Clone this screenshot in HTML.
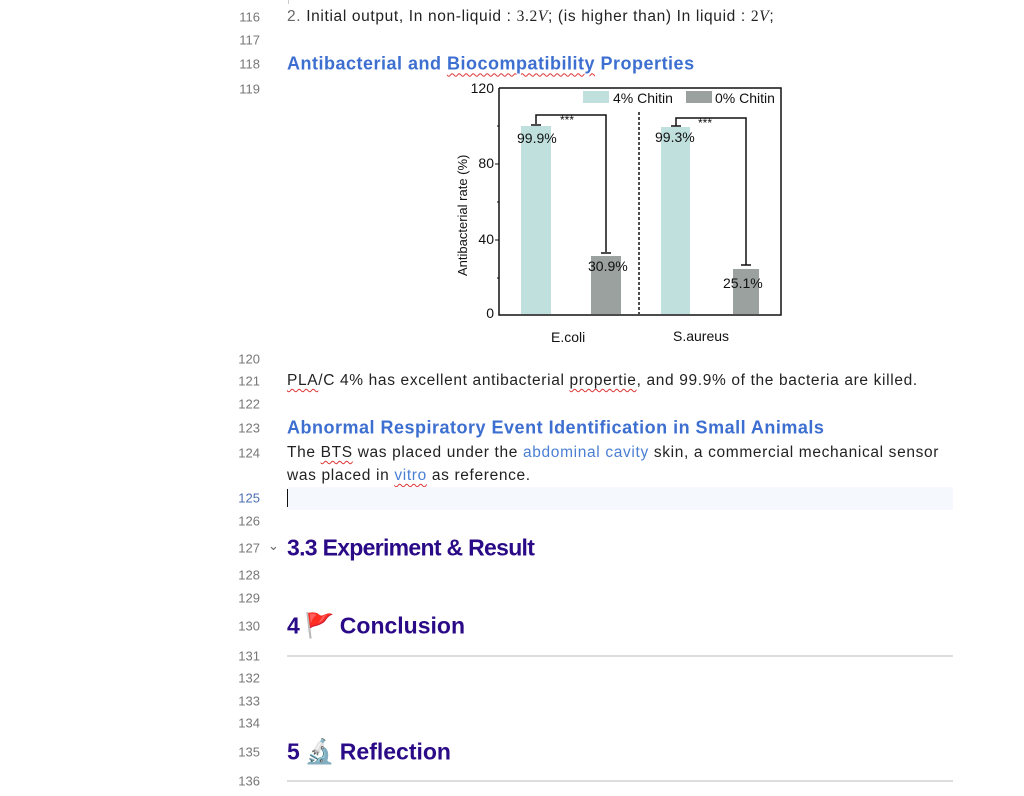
<!DOCTYPE html>
<html><head><meta charset="utf-8"><style>
body{margin:0;width:1024px;height:796px;background:#fff;position:relative;overflow:hidden;font-family:"Liberation Sans",sans-serif;color:#222}
.n{position:absolute;left:220px;width:40px;text-align:right;font-size:13px;color:#777;transform:translateY(-50%)}
.t{position:absolute;left:287px;font-size:15.5px;transform:translateY(-50%);white-space:nowrap;letter-spacing:0.65px}
.h3{color:#3d6fd0;font-weight:bold;font-size:18px;letter-spacing:0.5px}
.h2{color:#2a0a86;font-weight:bold;font-size:23px;letter-spacing:0}
.sq{text-decoration:underline wavy #d33;text-decoration-thickness:1px;text-underline-offset:3px}
.lk{color:#4a7fd4}
.hr{position:absolute;left:287px;width:666px;height:2px;background:#ddd}
.em{display:inline-block;width:40px;text-align:center;font-size:24px}
</style></head><body>
<div style="position:absolute;left:288px;top:0;width:1px;height:4px;background:#ccc"></div>
<div class="n" style="top:17px">116</div><div class="t" style="top:17px"><span style="color:#666">2.</span> Initial output, In non-liquid : <span style="font-family:'Liberation Serif',serif">3.2<i>V</i></span>; (is higher than) In liquid : <span style="font-family:'Liberation Serif',serif">2<i>V</i></span>;</div>
<div class="n" style="top:40px">117</div>
<div class="n" style="top:64px">118</div><div class="t h3" style="top:64px">Antibacterial and <span class="sq">Biocompatibility</span> Properties</div>
<div class="n" style="top:89px">119</div>
<svg style="position:absolute;left:450px;top:78px" width="340" height="272" font-family="Liberation Sans" font-size="14" fill="#111">
<rect x="71" y="48" width="30" height="188" fill="#bfe0dd"/>
<rect x="141" y="178" width="30" height="58" fill="#9aa19e"/>
<rect x="211" y="49" width="29" height="187" fill="#bfe0dd"/>
<rect x="283" y="191" width="26" height="45" fill="#9aa19e"/>
<rect x="133" y="13" width="26" height="12" fill="#bfe0dd"/>
<rect x="236" y="13" width="26" height="12" fill="#9aa19e"/>
<text x="163" y="25">4% Chitin</text><text x="265" y="25">0% Chitin</text>
<path d="M49 10V237H331V10H49" fill="none" stroke="#111" stroke-width="1.5"/>
<path d="M49 86h-4M49 162h-4M49 48h-2M49 124h-2M49 200h-2" stroke="#111"/>
<text x="44" y="15" text-anchor="end">120</text><text x="44" y="90" text-anchor="end">80</text><text x="44" y="166" text-anchor="end">40</text><text x="44" y="240" text-anchor="end">0</text>
<text transform="translate(17,198) rotate(-90)" font-size="13">Antibacterial rate (%)</text>
<path d="M189 34V236" stroke="#111" stroke-width="1.5" stroke-dasharray="3,2"/>
<path d="M86 46V37H156V174M81 47h10M151 175h10M226 48V40H296V187M221 48h10M291 187h10" fill="none" stroke="#111" stroke-width="1.5"/>
<text x="110" y="46" font-size="12">***</text><text x="248" y="49" font-size="12">***</text>
<text x="67" y="65">99.9%</text><text x="205" y="64">99.3%</text><text x="138" y="193">30.9%</text><text x="273" y="210">25.1%</text>
<text x="101" y="264">E.coli</text><text x="223" y="263">S.aureus</text>
</svg>
<div class="n" style="top:359px">120</div>
<div class="n" style="top:381px">121</div><div class="t" style="top:381px"><span class="sq">PLA</span>/C 4% has excellent antibacterial <span class="sq">propertie</span>, and 99.9% of the bacteria are killed.</div>
<div class="n" style="top:404px">122</div>
<div class="n" style="top:428px">123</div><div class="t h3" style="top:428px">Abnormal Respiratory Event Identification in Small Animals</div>
<div class="n" style="top:453px">124</div><div class="t" style="top:453px">The <span class="sq">BTS</span> was placed under the <span class="lk">abdominal cavity</span> skin, a commercial mechanical sensor</div>
<div class="t" style="top:476px">was placed in <span class="lk sq">vitro</span> as reference.</div>
<div style="position:absolute;left:287px;top:487px;width:666px;height:23px;background:#f5f8fd"></div>
<div style="position:absolute;left:287px;top:489px;width:1px;height:18px;background:#111"></div>
<div class="n" style="top:498px;color:#4a6fb0">125</div>
<div class="n" style="top:521px">126</div>
<div class="n" style="top:548px">127</div><div style="position:absolute;left:268px;top:538px;font-size:13px;color:#666">⌄</div>
<div class="t h2" style="top:548px;letter-spacing:-0.7px">3.3 Experiment &amp; Result</div>
<div class="n" style="top:575px">128</div>
<div class="n" style="top:598px">129</div>
<div class="n" style="top:626px">130</div><div class="t h2" style="top:626px">4<span class="em" style="color:#e22">🚩</span>Conclusion</div>
<div class="hr" style="top:655px"></div>
<div class="n" style="top:656px">131</div>
<div class="n" style="top:678px">132</div>
<div class="n" style="top:701px">133</div>
<div class="n" style="top:723px">134</div>
<div class="n" style="top:752px">135</div><div class="t h2" style="top:752px">5<span class="em" style="color:#7ab">🔬</span>Reflection</div>
<div class="hr" style="top:780px"></div>
<div class="n" style="top:781px">136</div>
</body></html>
